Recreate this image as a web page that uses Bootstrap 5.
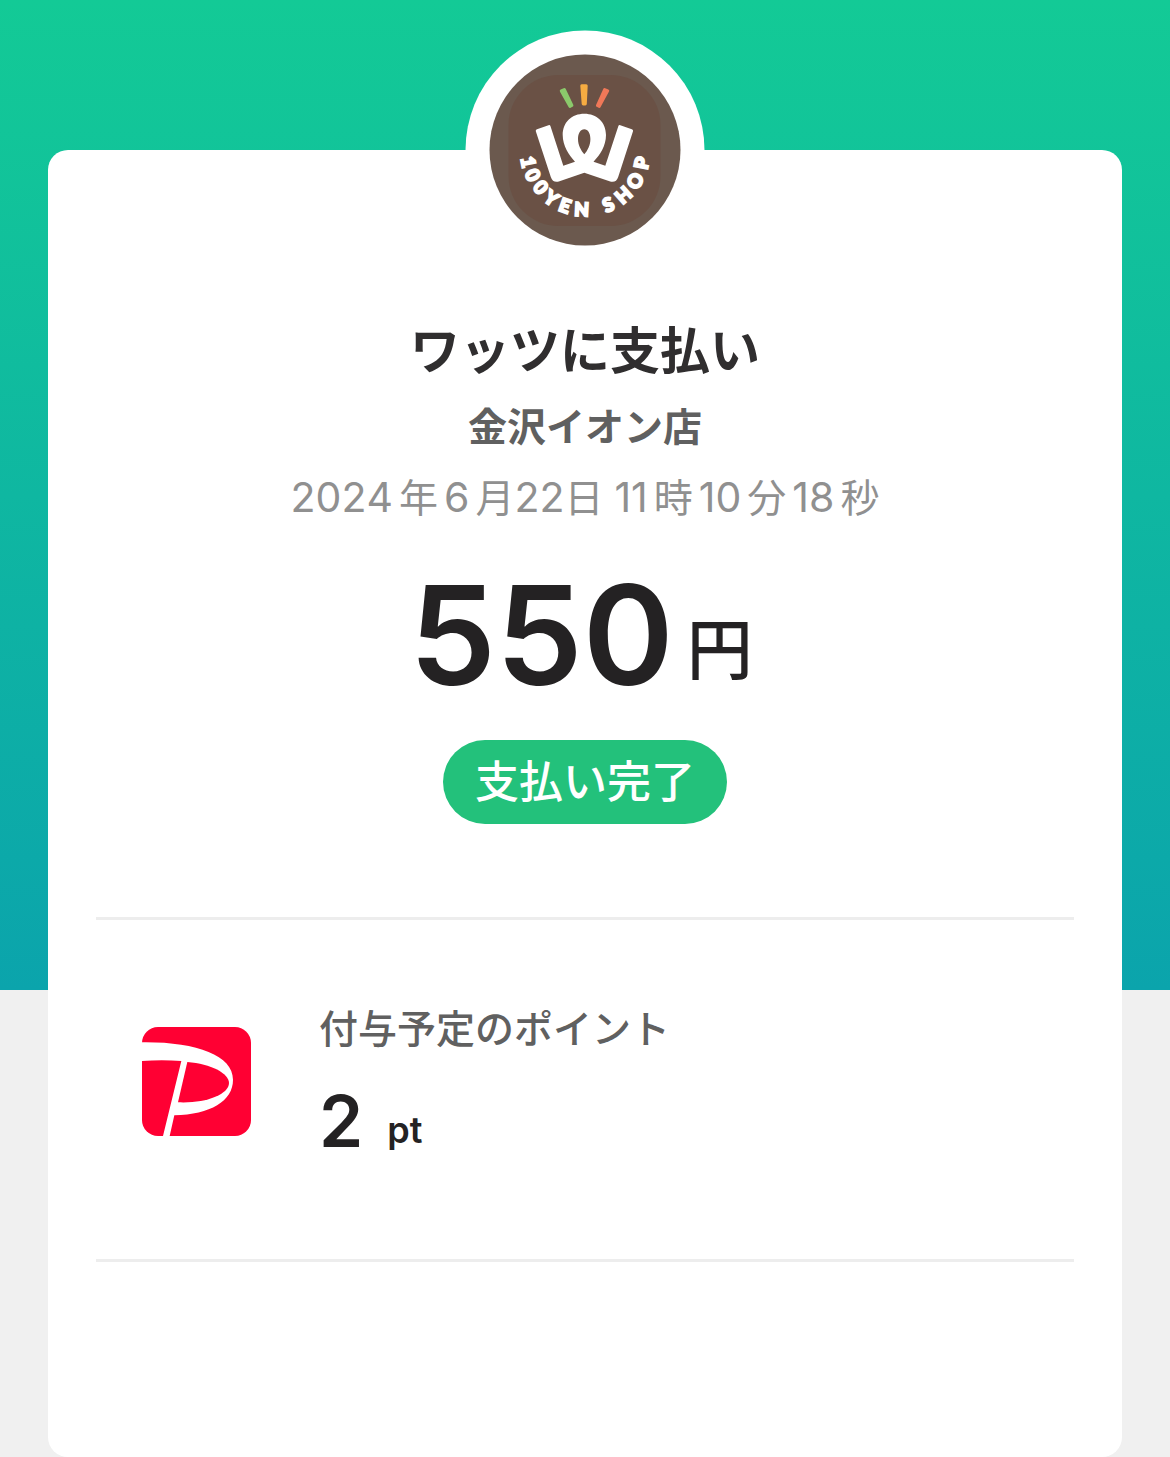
<!DOCTYPE html>
<html lang="ja">
<head>
<meta charset="utf-8">
<meta name="viewport" content="width=device-width, initial-scale=1">
<title>支払い完了</title>
<link href="https://cdn.jsdelivr.net/npm/bootstrap@5.3.0/dist/css/bootstrap.min.css" rel="stylesheet">
<style>
body {
  background: #f0f0f0 linear-gradient(#13ca96, #0ba4ac) no-repeat top / 100% 990px;
  font-family: Inter, "Noto Sans CJK JP", sans-serif;
  color: #242223;
}
.receipt { margin-top: 150px; border-radius: 20px; min-height: calc(100vh - 150px); }
.shop-logo { width: 240px; height: 240px; margin-top: -120px; }
.shop-name { font-size: 50px; line-height: 72px; font-weight: 700; color: #302e2f; margin-top: 45px; }
.branch { font-size: 39px; line-height: 56px; font-weight: 700; color: #606060; margin-top: 12px; }
.paid-at { font-size: 39px; line-height: 56px; color: #909090; margin: 14px 0 40px; }
.date-part { font-size: 41px; font-kerning: none; margin: 0 6px; }
.total { gap: 13px; margin-bottom: 36px; }
.amount { font-size: 138px; line-height: 138px; font-weight: 600; }
.yen { font-size: 66px; line-height: 108px; font-weight: 500; }
.status { background: #23c17b; color: #fff; font-size: 44px; line-height: 84px; font-weight: 500; padding: 0 32px; }
.rule { border-top: 3px solid #ededed; opacity: 1; }
.summary { padding-bottom: 93px; }
.points { padding: 81px 46px 98px; gap: 68px; }
.points-icon { width: 109px; height: 109px; }
.points-label { font-size: 39px; line-height: 56px; font-weight: 500; color: #606060; }
.points-value { font-size: 71px; line-height: 80px; font-weight: 600; }
.points-unit { font-size: 36px; line-height: 62px; font-weight: 600; }
</style>
</head>
<body>
<main class="receipt bg-white mx-5 px-5">
  <header class="summary d-flex flex-column align-items-center text-center">
    <svg class="shop-logo" viewBox="0 0 240 240" role="img" aria-label="100YEN SHOP">
      <circle cx="120" cy="120" r="119.5" fill="#fff"/>
      <circle cx="120" cy="120" r="95.5" fill="#6b594e"/>
      <rect x="43.500" y="45" width="152" height="151" rx="50" fill="#6a5145"/>
      <g stroke-width="3" stroke-linejoin="round">
        <path d="M96.300 60.900L99.300 59.500L106.900 75.500L105 76.400Z" fill="#8bc96b" stroke="#8bc96b"/>
        <path d="M116.800 55.700H121.200L120.300 73.900H118.200Z" fill="#f6ac42" stroke="#f6ac42"/>
        <path d="M139.600 59.500L142.700 60.900L134.300 76.400L132.400 75.500Z" fill="#f07858" stroke="#f07858"/>
      </g>
      <path fill="#fff" fill-rule="evenodd" d="M72 99.200L83.500 95.200Q85 94.700 85.500 96.200L98.300 135.700L110 131.700C104 125 97.700 116 97.700 105C97.700 92 107 83.700 119.300 83.700S141 92 141 105C141 116 135 125 128.500 131.700L140.300 135.700L153.300 96.200Q153.800 94.700 155.300 95.200L166.800 99.200Q168.500 99.700 168 101.200L153.200 147Q151 153.500 144.500 151.300L119.300 142.700L94.500 151.300Q88 153.500 85.800 147L70.800 101.200Q70.400 99.700 72 99.200ZM119.300 99.300C115.500 99.300 113 103.500 113 109C113 115 116 120.500 119.300 124.300C122.700 120.500 125.400 115 125.400 109C125.400 103.500 123 99.300 119.300 99.300Z"/>
      <text fill="#fff" stroke="#fff" stroke-width="2" font-family="Lato, sans-serif" font-weight="900" font-size="19"
        x="55.500 59.200 66.900 77.300 92.500 108.900 128 141.200 157.600 172.300 182.200"
        y="127.900 143 157.600 170.300 180.300 185.800 187 183.100 175 160.900 140.300"
        rotate="78.600 64.800 50.100 34.500 19.300 2.900 0 -23.500 -41.400 -59.900 -78.600">100YEN SHOP</text>
    </svg>
    <h1 class="shop-name mb-0">ワッツに支払い</h1>
    <p class="branch mb-0">金沢イオン店</p>
    <p class="paid-at"><span class="date-part ms-0">2024</span>年<span class="date-part">6</span>月<span class="date-part mx-0">22</span>日 <span class="date-part ms-0">11</span>時<span class="date-part">10</span>分<span class="date-part">18</span>秒</p>
    <p class="total d-flex align-items-end me-2"><span class="amount">550</span><span class="yen">円</span></p>
    <span class="status rounded-pill">支払い完了</span>
  </header>
  <hr class="rule my-0">
  <section class="points d-flex align-items-center">
    <svg class="points-icon flex-shrink-0" viewBox="0 0 327 327" aria-hidden="true">
      <rect width="327" height="327" rx="48" fill="#ff0033"/>
      <path fill="#fff" d="M0 46C160 44 273 84 273 158C273 222 205 262 97 265L83 327H63L118 102Q60 98 0 102Z"/>
      <path fill="#ff0033" d="M136 105C207 111 261 139 261 168C261 203 188 230 108 226Z"/>
    </svg>
    <div>
      <h2 class="points-label mb-4">付与予定のポイント</h2>
      <p class="mb-0 d-flex align-items-end gap-4"><span class="points-value">2</span><span class="points-unit">pt</span></p>
    </div>
  </section>
  <hr class="rule my-0">
</main>
<script src="https://cdn.jsdelivr.net/npm/bootstrap@5.3.0/dist/js/bootstrap.bundle.min.js"></script>
</body>
</html>
